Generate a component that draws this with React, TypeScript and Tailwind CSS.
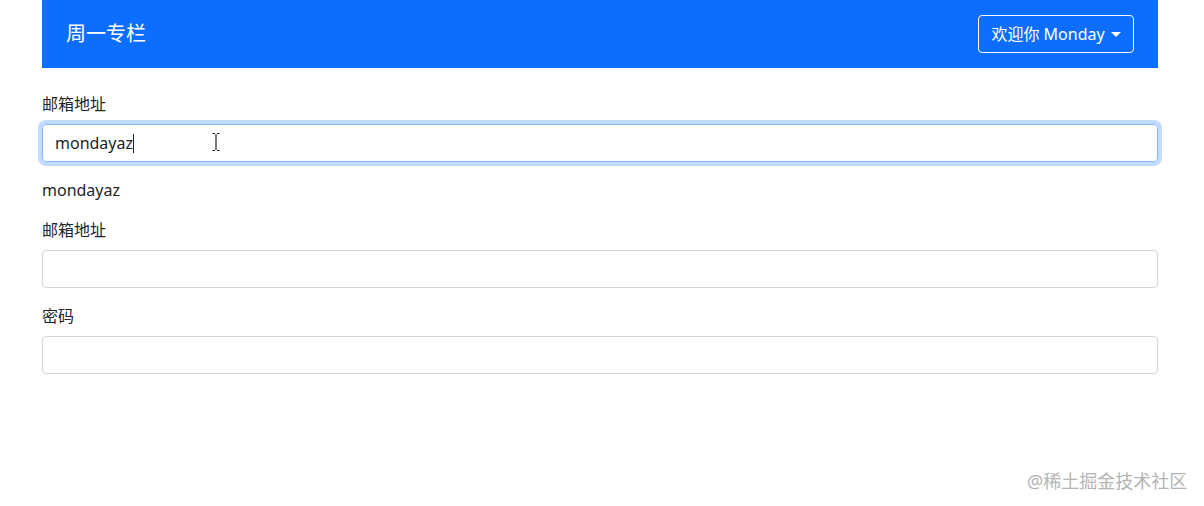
import React from 'react';

const font = { fontFamily: '"Noto Sans", "Noto Sans CJK SC", sans-serif' };

const Label: React.FC<{ children: React.ReactNode }> = ({ children }) => (
  <label className="block mb-2 text-[16px] leading-6 text-[#212529]">{children}</label>
);

export default function App() {
  return (
    <div className="relative w-[1204px] h-[506px] bg-white overflow-hidden" style={font}>
      <div className="ml-[42px] w-[1116px]">
        <nav className="h-[68px] bg-[#0d6efd] flex items-center justify-between px-6">
          <span className="text-white text-[20px] leading-none">周一专栏</span>
          <button
            type="button"
            className="h-[38px] w-[156px] border border-white rounded text-white text-[16px] flex items-center justify-center gap-1"
          >
            欢迎你 Monday
            <span className="inline-block w-0 h-0 border-l-[5px] border-r-[5px] border-t-[5px] border-l-transparent border-r-transparent border-t-white ml-0.5" />
          </button>
        </nav>

        <div className="mt-6">
          <Label>邮箱地址</Label>
          <div className="relative h-[38px] border border-[#86b7fe] rounded shadow-[0_0_0_4px_rgba(13,110,253,0.25)] px-3 flex items-center text-[16px] text-[#212529]">
            mondayaz
            <span className="inline-block w-px h-[19px] bg-[#212529]" />
            {/* mouse I-beam cursor */}
            <svg className="absolute left-[169px] top-[8px]" width="8" height="18" viewBox="0 0 8 18">
              <path d="M0.5 0.5h2.5M5 0.5h2.5M4 1v16M0.5 17.5h2.5M5 17.5h2.5" stroke="#222" strokeWidth="1.2" fill="none" />
            </svg>
          </div>
        </div>

        <div className="mt-4 text-[16px] leading-6 text-[#212529]">mondayaz</div>

        <div className="mt-4">
          <Label>邮箱地址</Label>
          <input type="email" className="block w-full h-[38px] border border-[#ced4da] rounded px-3 outline-none" />
        </div>

        <div className="mt-4">
          <Label>密码</Label>
          <input type="password" className="block w-full h-[38px] border border-[#ced4da] rounded px-3 outline-none" />
        </div>
      </div>

      <div className="absolute left-[1027px] top-[469px] text-[18px] leading-6 text-[#b4b4b4]">@稀土掘金技术社区</div>
    </div>
  );
}
